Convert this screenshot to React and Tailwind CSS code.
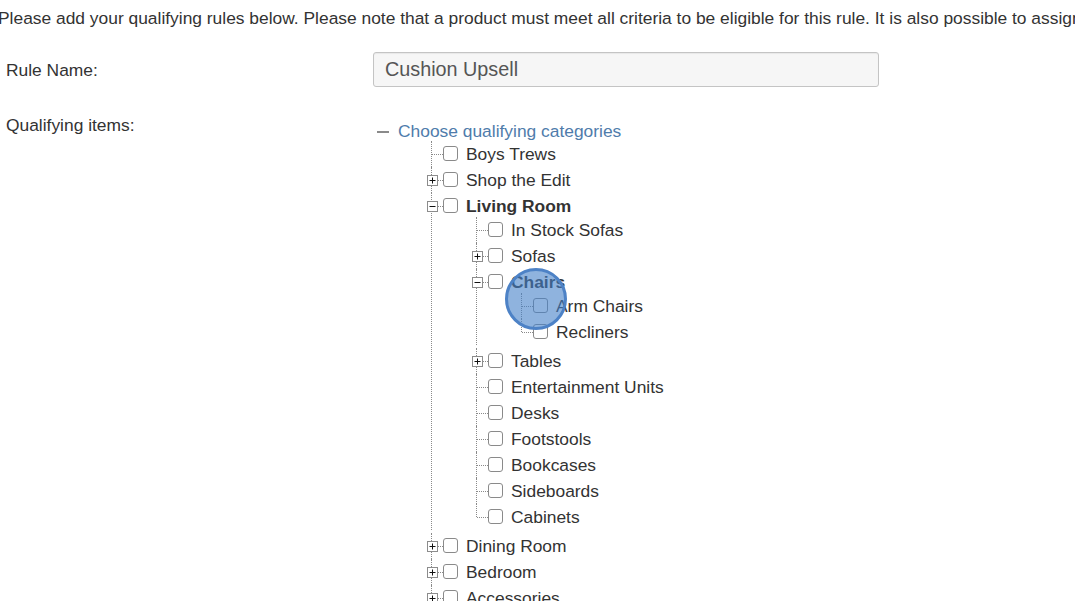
import React from "react";

const tree = [
  { label: "Boys Trews" },
  { label: "Shop the Edit", children: [] },
  {
    label: "Living Room",
    bold: true,
    open: true,
    children: [
      { label: "In Stock Sofas" },
      { label: "Sofas", children: [] },
      {
        label: "Chairs",
        bold: true,
        open: true,
        children: [{ label: "Arm Chairs" }, { label: "Recliners" }],
      },
      { label: "Tables", children: [] },
      { label: "Entertainment Units" },
      { label: "Desks" },
      { label: "Footstools" },
      { label: "Bookcases" },
      { label: "Sideboards" },
      { label: "Cabinets" },
    ],
  },
  { label: "Dining Room", children: [] },
  { label: "Bedroom", children: [] },
  { label: "Accessories", children: [] },
  { label: "Garden", children: [] },
];

// little +/- box on the tree lines
function Expander({ open }) {
  return (
    <svg width="11" height="11" viewBox="0 0 11 11" className="relative z-10">
      <rect x="0.5" y="0.5" width="10" height="10" fill="#fff" stroke="#8c8c8c" />
      <line x1="2.5" y1="5.5" x2="8.5" y2="5.5" stroke="#111" strokeWidth="1" />
      {!open && <line x1="5.5" y1="2.5" x2="5.5" y2="8.5" stroke="#111" strokeWidth="1" />}
    </svg>
  );
}

function TreeNode({ node, last }) {
  const hasKids = Array.isArray(node.children);
  return (
    <li className="relative">
      {/* vertical guide line */}
      <span
        className={`absolute left-[10px] top-0 border-l border-dotted border-[#8a8a8a] ${
          last ? "h-[13px]" : "bottom-0"
        }`}
      />
      <div className="flex items-center h-[26px]">
        <div className="relative w-[22px] h-full flex items-center justify-center">
          <span className="absolute left-[11px] right-0 top-[13px] border-t border-dotted border-[#8a8a8a]" />
          {hasKids && <Expander open={node.open} />}
        </div>
        <span className="w-[15px] h-[15px] mb-[2px] border border-[#8a8a8a] rounded-[3px] bg-white shrink-0" />
        <span className={`ml-[8px] whitespace-nowrap ${node.bold ? "font-bold" : ""}`}>
          {node.label}
        </span>
      </div>
      {hasKids && node.open && node.children.length > 0 && (
        <ul className="ml-[45px] mt-[-2px] mb-[3px]">
          {node.children.map((c, i) => (
            <TreeNode key={c.label} node={c} last={i === node.children.length - 1} />
          ))}
        </ul>
      )}
    </li>
  );
}

export default function App() {
  return (
    <div
      className="relative w-[1075px] h-[601px] overflow-hidden bg-white text-[#333] text-[17.4px]"
      style={{ fontFamily: '"Liberation Sans", Arial, sans-serif' }}
    >
      <p className="pt-[8px] leading-[20px] ml-[-2px] whitespace-nowrap">
        Please add your qualifying rules below. Please note that a product must meet all criteria to be eligible for this rule. It is also possible to assign a priority to each rule.
      </p>

      <div className="flex items-center mt-[24px]">
        <label className="w-[373px] pl-[6px] leading-[20px]">Rule Name:</label>
        <div className="w-[506px] h-[35px] flex items-center px-[11px] border border-[#c4c4c4] rounded-[3px] bg-[#f6f6f6] text-[#555] text-[19.8px] shadow-[inset_0_1px_1px_rgba(0,0,0,0.06)]">
          Cushion Upsell
        </div>
      </div>

      <div className="flex mt-[28px]">
        <label className="w-[373px] pl-[6px] leading-[20px]">Qualifying items:</label>
        <div className="pt-[3px]">
          <div className="flex items-center h-[26px] pl-[4px]">
            <span className="w-[12px] border-t-2 border-[#8a8a8a] mt-[1px]" />
            <span className="ml-[9px] text-[#4f7cab]">Choose qualifying categories</span>
          </div>
          <ul className="ml-[48px] mt-[-3px]">
            {tree.map((n) => (
              <TreeNode key={n.label} node={n} last={false} />
            ))}
          </ul>
        </div>
      </div>

      {/* click highlight */}
      <div className="absolute left-[505px] top-[268px] w-[62px] h-[62px] rounded-full bg-[rgba(68,128,200,0.6)] border-[3px] border-[#4d82c6]" />
    </div>
  );
}
